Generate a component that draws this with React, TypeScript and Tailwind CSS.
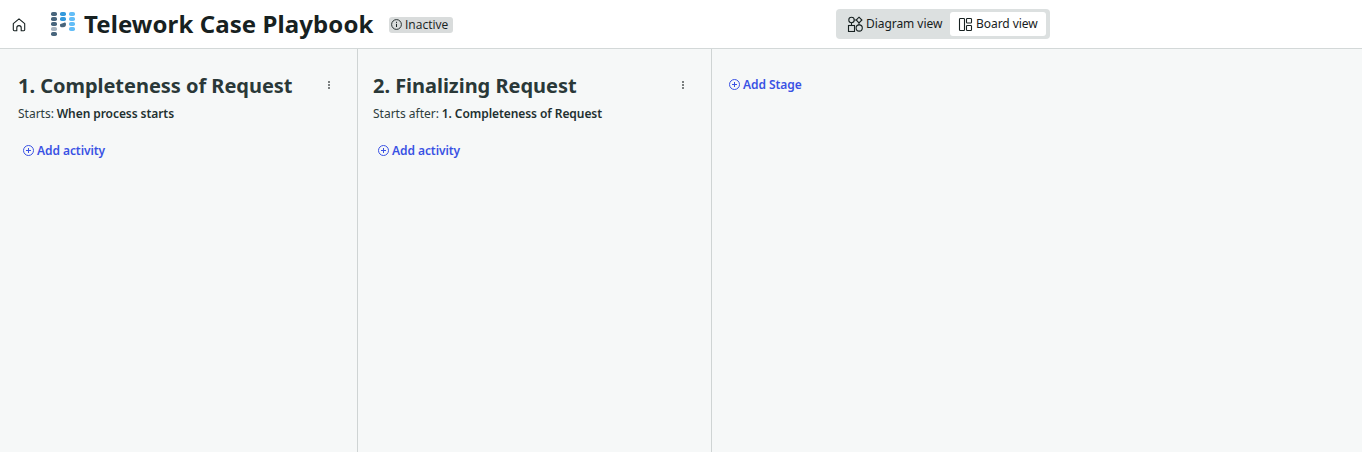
import React from "react";

function PlusCircle() {
  return (
    <svg width="12" height="12" viewBox="0 0 12 12" fill="none" stroke="currentColor" className="shrink-0">
      <circle cx="5.5" cy="5.5" r="5" strokeWidth="1" />
      <path d="M5.5 3v5M3 5.500h5" strokeWidth="1" />
    </svg>
  );
}

function AddButton({ label }: { label: string }) {
  return (
    <button className="flex h-[18px] items-center gap-[2px] text-[12px] leading-[18px] font-semibold tracking-[-0.07px] text-[#3a52e4] whitespace-nowrap">
      <PlusCircle />
      <span>{label}</span>
    </button>
  );
}

function MoreIcon() {
  return (
    <svg width="2" height="8" viewBox="0 0 2 8" fill="#7b8080" className="mt-[8px] shrink-0">
      <rect width="2" height="2" />
      <rect y="3" width="2" height="2" />
      <rect y="6" width="2" height="2" />
    </svg>
  );
}

function Stage({ title, prefix, after }: { title: string; prefix: string; after: string }) {
  return (
    <>
      <div className="flex justify-between">
        <h2 className="h-[26px] text-[20px] leading-[26px] font-bold tracking-[-0.03px] text-[#2a3838] whitespace-nowrap">{title}</h2>
        <MoreIcon />
      </div>
      <p className="mt-[6px] h-[18px] text-[12px] leading-[18px] text-[#2e3d3d] whitespace-nowrap">
        {prefix} <span className="-ml-[0.3px] font-semibold tracking-[-0.07px] text-[#223030]">{after}</span>
      </p>
      <div className="mt-[19px] pl-[5px]">
        <AddButton label="Add activity" />
      </div>
    </>
  );
}

function Logo() {
  return (
    <svg width="24" height="24" viewBox="0 0 24 24">
      <g fill="#48657c">
        <rect x="0" y="0" width="6" height="4" rx="1.8" />
        <rect x="0" y="5" width="6" height="4" rx="1.8" />
        <rect x="0" y="10" width="6" height="4" rx="1.8" />
        <rect x="0" y="20" width="6" height="4" rx="1.8" />
        <path d="M9 13c0-1 .8-1.4 2-1.5l2.600-.9c1 0 1.400.6 1.400 1.600 0 1.800-1 3-3 3h-1.500C9.500 15.200 9 14.500 9 13z" />
      </g>
      <rect x="0" y="15" width="6" height="4" rx="1.8" fill="#a4b1bd" />
      <g fill="#3399dc">
        <rect x="9" y="0" width="6" height="4" rx="1.8" />
        <rect x="9" y="5" width="6" height="4" rx="1.8" />
      </g>
      <g fill="#63bdf7">
        <rect x="18" y="0" width="6" height="4" rx="1.8" />
        <rect x="18" y="5" width="6" height="4" rx="1.8" />
        <rect x="18" y="10" width="6" height="4" rx="1.8" />
        <rect x="18" y="15" width="6" height="4" rx="1.8" />
      </g>
    </svg>
  );
}

export default function App() {
  return (
    <div className="flex h-[452px] w-[1362px] flex-col overflow-hidden bg-[#f6f8f8] font-['Noto_Sans',sans-serif] text-[#172121]">
      <header className="flex h-[49px] shrink-0 items-start border-b border-[#d3d8d8] bg-white">
        <div className="ml-[12px] mt-[18px] w-[39px]">
          <svg width="14" height="14" viewBox="0 0 14 14" fill="none" stroke="#172121" strokeWidth="1.100" strokeLinejoin="round">
            <path d="M1.300 5.600 7 .8l5.700 4.800v6.200q0 .9-.9.900H9.200V9.800a2.200 2.200 0 0 0-4.400 0v2.900H2.200q-.9 0-.9-.9z" />
          </svg>
        </div>
        <div className="mt-[12px] w-[33px]"><Logo /></div>
        <h1 className="mt-[8px] w-[305px] text-[24px] leading-[32px] font-bold tracking-[0.09px] whitespace-nowrap">Telework Case Playbook</h1>
        <div className="mt-[17px] flex h-[16px] w-[64px] items-center gap-[3px] rounded-[3px] bg-[#d9dcdc] pl-[2px] font-['Open_Sans',sans-serif] text-[12px] leading-[16px]">
          <svg width="11" height="11" viewBox="0 0 11 11" fill="none" stroke="#172121" className="mb-px shrink-0">
            <circle cx="5.500" cy="5.500" r="4.900" strokeWidth=".9" />
            <path d="M5.500 4.800v3.200M5.500 2.800v1.100" />
          </svg>
          <span>Inactive</span>
        </div>
        <nav className="ml-[383px] mt-[9px] flex h-[30px] w-[214px] rounded-[4px] bg-[#dce0e0] p-[3px] text-[12px] leading-[16px] tracking-[-0.05px] whitespace-nowrap">
          <button className="flex h-[24px] w-[111px] items-center gap-[3px] pl-[8px]">
            <svg width="16" height="16" viewBox="0 0 16 16" fill="none" stroke="#172121" strokeWidth="1.100" className="shrink-0">
              <circle cx="4.500" cy="4" r="2.700" />
              <path d="M12 1.200 14.900 4 12 6.900 9.200 4zM7.200 4h2M4.500 6.700v2.800M12 6.900v2" />
              <rect x="1.500" y="9.500" width="6" height="6" />
              <circle cx="12.200" cy="12" r="3.100" />
            </svg>
            Diagram view
          </button>
          <button className="flex h-[24px] w-[96px] items-center gap-[3px] rounded-[3px] bg-white pl-[8px]">
            <svg width="15" height="14" viewBox="0 0 15 14" fill="none" stroke="#172121" strokeWidth="1.100" className="shrink-0">
              <rect x="1.500" y="1.500" width="5" height="12" rx=".8" />
              <rect x="8.500" y="1.500" width="5" height="4.500" rx=".8" />
              <rect x="8.500" y="8.500" width="5" height="5" rx=".8" />
            </svg>
            Board view
          </button>
        </nav>
      </header>
      <main className="flex min-h-0 flex-1">
        <section className="w-[358px] border-r border-[#cfd4d4] pt-[24px] pr-[27px] pl-[18px]">
          <Stage title="1. Completeness of Request" prefix="Starts:" after="When process starts" />
        </section>
        <section className="w-[354px] border-r border-[#cfd4d4] pt-[24px] pr-[27px] pl-[15px]">
          <Stage title="2. Finalizing Request" prefix="Starts after:" after="1. Completeness of Request" />
        </section>
        <section className="flex-1 pt-[27px] pl-[17px]">
          <AddButton label="Add Stage" />
        </section>
      </main>
    </div>
  );
}
